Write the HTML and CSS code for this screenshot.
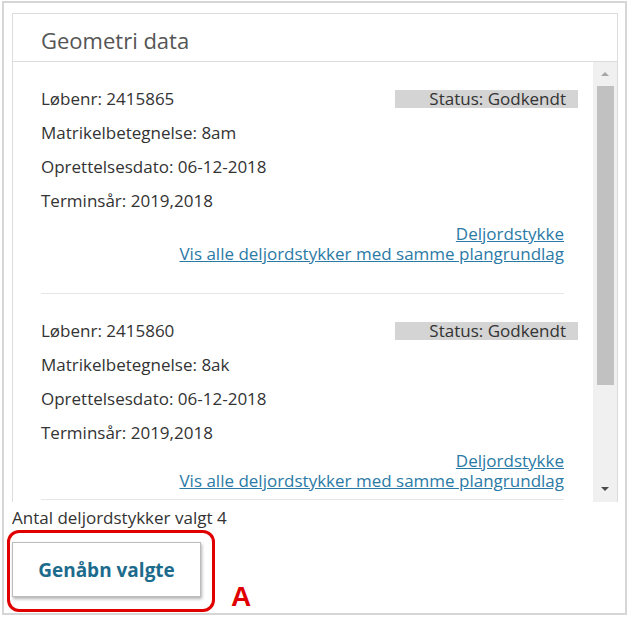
FILE: index.html
```html
<!DOCTYPE html>
<html>
<head>
  <meta charset="utf-8">
  <title>Geometri data</title>
  <link rel="stylesheet" href="styles.css">
</head>
<body>

<div class="frame">
  <div class="panel">
    <div class="panel-title">Geometri data</div>

    <div class="scroll-box">
      <div class="record-list">
        <div class="record">
          <div class="row row-head">
            <span>Løbenr: 2415865</span>
            <span class="status">Status: Godkendt</span>
          </div>
          <div class="row">Matrikelbetegnelse: 8am</div>
          <div class="row">Oprettelsesdato: 06-12-2018</div>
          <div class="row">Terminsår: 2019,2018</div>
          <div class="links">
            <a href="#">Deljordstykke</a>
            <a href="#">Vis alle deljordstykker med samme plangrundlag</a>
          </div>
        </div>

        <div class="record record-tight">
          <div class="row row-head">
            <span>Løbenr: 2415860</span>
            <span class="status">Status: Godkendt</span>
          </div>
          <div class="row">Matrikelbetegnelse: 8ak</div>
          <div class="row">Oprettelsesdato: 06-12-2018</div>
          <div class="row">Terminsår: 2019,2018</div>
          <div class="links">
            <a href="#">Deljordstykke</a>
            <a href="#">Vis alle deljordstykker med samme plangrundlag</a>
          </div>
        </div>
      </div>

      <!-- fake scrollbar, the list itself does not scroll -->
      <div class="scrollbar">
        <div class="scroll-btn"><span class="arrow-up"></span></div>
        <div class="scroll-track">
          <div class="scroll-thumb"></div>
        </div>
        <div class="scroll-btn"><span class="arrow-down"></span></div>
      </div>
    </div>
  </div>

  <div class="selected-count">Antal deljordstykker valgt 4</div>

  <div class="actions">
    <div class="callout">
      <button class="reopen-btn">Genåbn valgte</button>
    </div>
    <span class="callout-label">A</span>
  </div>
</div>

</body>
</html>
```

FILE: styles.css
```css
body {
  margin: 0;
  font-family: "Open Sans", "Noto Sans", sans-serif;
  color: #333;
  background: #fff;
}
.frame {
  width: 621px;
  margin: 1px 0 0 2px;
  padding: 10px 0 1px 0;
  border: 2px solid #d6d6d6;
}
.panel {
  width: 604px;
  margin-left: 8px;
  border: 1px solid #dcdcdc;
  border-bottom: none;
}
.panel-title {
  font-size: 22px;
  line-height: 24px;
  color: #555;
  padding: 14px 28px 9px 28px;
  border-bottom: 1px solid #dcdcdc;
}
.scroll-box {
  display: flex;
  height: 440px;
}
.record-list {
  flex: 1;
  overflow: hidden;
  padding: 0 15px 0 28px;
}
.record {
  margin-right: 14px;
  padding: 20px 0 29px 0;
  border-bottom: 1px solid #e6e6e6;
  font-size: 17px;
}
.record-tight { padding-bottom: 8px; }
.row { line-height: 34px; }
.row-head {
  display: flex;
  justify-content: space-between;
  align-items: center;
}
.status {
  width: 183px;
  box-sizing: border-box;
  margin-right: -14px;
  padding-right: 12px;
  background-color: #d4d4d4;
  line-height: 18px;
  text-align: right;
}
.links {
  margin-top: 6px;
  display: flex;
  flex-direction: column;
  align-items: flex-end;
}
.record-tight .links { margin-top: 1px; }
.links a {
  color: #2b7aa6;
  line-height: 20px;
}
.scrollbar {
  width: 24px;
  background-color: #f0f0f0;
  display: flex;
  flex-direction: column;
}
.scroll-btn {
  height: 24px;
  display: flex;
  align-items: center;
  justify-content: center;
}
.scroll-btn:last-child { height: 26px; }
.arrow-up {
  border-left: 4px solid transparent;
  border-right: 4px solid transparent;
  border-bottom: 4px solid #a6a6a6;
}
.arrow-down {
  border-left: 4px solid transparent;
  border-right: 4px solid transparent;
  border-top: 4px solid #4a4a4a;
}
.scroll-track { flex: 1; }
.scroll-thumb {
  width: 17px;
  height: 299px;
  margin-left: 4px;
  background-color: #c1c1c1;
}
.selected-count {
  margin: 6px 0 0 8px;
  font-size: 17px;
  line-height: 20px;
}
.actions {
  display: flex;
  align-items: flex-end;
  margin-top: 2px;
}
.callout {
  margin-left: 3px;
  padding: 9px 11px 12px 2px;
  border: 3px solid #e00000;
  border-radius: 12px;
}
.reopen-btn {
  display: block;
  width: 189px;
  height: 55px;
  background: #fff;
  border: 1px solid #bcbcbc;
  box-shadow: 1px 2px 3px rgba(0, 0, 0, 0.3);
  font-family: "Open Sans", "Noto Sans", sans-serif;
  font-size: 19px;
  font-weight: bold;
  color: #1d6b8c;
}
.callout-label {
  margin: 0 0 1px 16px;
  font-family: "Liberation Sans", Arial, sans-serif;
  font-size: 28px;
  font-weight: bold;
  line-height: 28px;
  color: #e00000;
}
```
